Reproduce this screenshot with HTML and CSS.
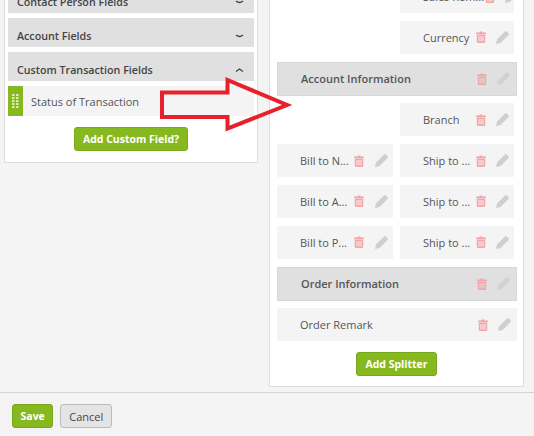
FILE: index.html
```html
<!DOCTYPE html>
<html lang="en">
<head>
  <meta charset="UTF-8" />
  <title>Transaction Fields</title>
  <link rel="stylesheet" href="styles.css">
</head>
<body>
  <svg class="defs" width="0" height="0">
    <symbol id="trash" viewBox="0 0 10 12">
      <path d="M3.500 1.600V.5h3v1.100H10v1.300H0V1.600zM.8 3.600h8.400v7.400l-.9 1H1.700l-.9-1zM2.500 5v5.500h1V5zM4.500 5v5.500h1V5zM6.500 5v5.500h1V5z" fill-rule="evenodd"/>
    </symbol>
    <symbol id="pencil" viewBox="0 0 13 13">
      <path d="M9 .4a1.200 1.200 0 0 1 1.700 0l1.900 1.900a1.200 1.200 0 0 1 0 1.700L4.600 12 0 13l1-4.600z"/>
    </symbol>
    <symbol id="grip" viewBox="0 0 7 15">
      <path d="M0 0h2.500v2H0zM4 0h2.500v2H4zM0 3h2.500v2H0zM4 3h2.500v2H4zM0 6h2.500v2H0zM4 6h2.500v2H4zM0 9h2.500v2H0zM4 9h2.500v2H4zM0 12h2.500v2H0zM4 12h2.500v2H4z"/>
    </symbol>
  </svg>

  <div class="main">
    <div class="panel panel-left">
      <div class="group">Contact Person Fields
        <svg class="chev" width="9" height="4" viewBox="0 0 9 4"><path d="M1 1q3.500 3 7 0"/></svg>
      </div>
      <div class="group">Account Fields
        <svg class="chev" width="9" height="4" viewBox="0 0 9 4"><path d="M1 1q3.500 3 7 0"/></svg>
      </div>
      <div class="group">Custom Transaction Fields
        <svg class="chev" width="9" height="4" viewBox="0 0 9 4"><path d="M1 3.500L4.500 1 8 3.500"/></svg>
      </div>
      <div class="custom-field">
        <span class="handle"><svg width="7" height="15"><use href="#grip"/></svg></span>
        Status of Transaction
      </div>
      <div class="actions"><button class="btn btn-green">Add Custom Field?</button></div>
    </div>

    <div class="panel panel-right">
      <div class="layout-grid">
        <div class="cell col2"><span class="label">Sales Rem...</span><svg class="ico-trash"><use href="#trash"/></svg><svg class="ico-pencil"><use href="#pencil"/></svg></div>
        <div class="cell col2"><span class="label">Currency</span><svg class="ico-trash"><use href="#trash"/></svg><svg class="ico-pencil"><use href="#pencil"/></svg></div>
        <div class="cell wide section"><span class="label">Account Information</span><svg class="ico-trash"><use href="#trash"/></svg><svg class="ico-pencil"><use href="#pencil"/></svg></div>
        <div class="cell col2"><span class="label">Branch</span><svg class="ico-trash"><use href="#trash"/></svg><svg class="ico-pencil"><use href="#pencil"/></svg></div>
        <div class="cell col1"><span class="label">Bill to N...</span><svg class="ico-trash"><use href="#trash"/></svg><svg class="ico-pencil"><use href="#pencil"/></svg></div>
        <div class="cell"><span class="label">Ship to ...</span><svg class="ico-trash"><use href="#trash"/></svg><svg class="ico-pencil"><use href="#pencil"/></svg></div>
        <div class="cell col1"><span class="label">Bill to A...</span><svg class="ico-trash"><use href="#trash"/></svg><svg class="ico-pencil"><use href="#pencil"/></svg></div>
        <div class="cell"><span class="label">Ship to ...</span><svg class="ico-trash"><use href="#trash"/></svg><svg class="ico-pencil"><use href="#pencil"/></svg></div>
        <div class="cell col1"><span class="label">Bill to P...</span><svg class="ico-trash"><use href="#trash"/></svg><svg class="ico-pencil"><use href="#pencil"/></svg></div>
        <div class="cell"><span class="label">Ship to ...</span><svg class="ico-trash"><use href="#trash"/></svg><svg class="ico-pencil"><use href="#pencil"/></svg></div>
        <div class="cell wide section"><span class="label">Order Information</span><svg class="ico-trash"><use href="#trash"/></svg><svg class="ico-pencil"><use href="#pencil"/></svg></div>
        <div class="cell wide"><span class="label">Order Remark</span><svg class="ico-trash"><use href="#trash"/></svg><svg class="ico-pencil"><use href="#pencil"/></svg></div>
      </div>
      <div class="actions"><button class="btn btn-green">Add Splitter</button></div>
    </div>
  </div>

  <div class="footer">
    <button class="btn btn-green btn-save">Save</button>
    <button class="btn btn-grey">Cancel</button>
  </div>

  <!-- annotation drawn over the screenshot -->
  <svg class="arrow" width="140" height="60" viewBox="160 76 140 60">
    <path d="M162 92.500H227.500V80L287 105 227.500 128.500V117H162z"/>
  </svg>
</body>
</html>
```

FILE: styles.css
```css
* {
  box-sizing: border-box;
}
html, body {
  height: 436px;
}
body {
  margin: 0;
  position: relative;
  overflow: hidden;
  background: #f4f4f4;
  font-family: 'Open Sans', sans-serif;
  font-size: 11px;
  color: #555;
  display: flex;
  flex-direction: column;
}
.defs {
  position: absolute;
}
.main {
  height: 392px;
  flex: none;
  display: flex;
  align-items: flex-start;
  padding-left: 4px;
  gap: 11px;
  overflow: hidden;
}
.panel {
  background: #fff;
  border: 1px solid #ddd;
}
.panel-left {
  width: 254px;
  height: 184px;
  margin-top: -21px;
  padding: 4px 3px 0;
  display: flex;
  flex-direction: column;
  gap: 5px;
}
.panel-right {
  width: 255px;
  height: 412px;
  margin-top: -25px;
  padding: 4px 6px 0 7px;
}
.group {
  height: 29px;
  background: #e0e0e0;
  padding: 6px 10px 0 9px;
  font-size: 10.700px;
  font-weight: 600;
  color: #444;
  display: flex;
  align-items: center;
  justify-content: space-between;
}
.chev {
  fill: none;
  stroke: #444;
  stroke-width: 1.300;
}
.custom-field {
  height: 30px;
  background: #f4f4f4;
  display: flex;
  align-items: center;
  gap: 8px;
}
.handle {
  width: 15px;
  height: 30px;
  background: #86b91f;
  display: flex;
  align-items: center;
  justify-content: center;
}
.handle svg {
  fill: #dcedb4;
}
.actions {
  display: flex;
  justify-content: center;
  margin-top: 6px;
}
.panel-right .actions {
  margin-top: 11px;
  margin-right: 1px;
}
.btn {
  height: 24px;
  padding: 0 8px;
  border-radius: 3px;
  font-family: 'Open Sans', sans-serif;
  font-size: 11px;
  line-height: 1;
}
.btn-green {
  background: #86b91f;
  border: 1px solid #7aa81c;
  color: #fff;
  font-size: 10.500px;
  font-weight: 700;
}
.btn-grey {
  background: #e4e4e4;
  border: 1px solid #bbb;
  color: #444;
}
.layout-grid {
  display: grid;
  grid-template-columns: 116px 114px;
  column-gap: 7px;
  row-gap: 7.800px;
}
.cell {
  height: 33px;
  background: #f4f4f4;
  padding-left: 23px;
  display: flex;
  align-items: center;
}
.col1 .ico-trash {
  margin-right: 1px;
}
.col2 {
  grid-column: 2;
}
.col2 .ico-trash {
  margin-left: 1px;
}
.wide {
  grid-column: 1 / -1;
  width: 240px;
}
.wide .ico-pencil {
  margin-right: 6px;
}
.section {
  height: 34px;
  background: #e0e0e0;
  border: 1px solid #d8d8d8;
  font-weight: 600;
}
.label {
  flex: 1;
  white-space: nowrap;
}
.ico-trash {
  width: 10px;
  height: 12px;
  fill: #f5a3a7;
  flex: none;
}
.ico-pencil {
  width: 13px;
  height: 13px;
  margin: 0 5px 0 10px;
  fill: #cfcfcf;
  flex: none;
}
.section .ico-pencil {
  fill: #d2d2d2;
}
.footer {
  height: 44px;
  flex: none;
  border-top: 1px solid #d4d4d4;
  padding: 11px 0 0 12px;
  display: flex;
  gap: 7px;
}
.footer .btn {
  padding: 0 8px;
}
.footer .btn-save {
  padding: 0 7.500px;
}
.arrow {
  position: absolute;
  left: 160px;
  top: 76px;
  fill: none;
  stroke: #e8202b;
  stroke-width: 4;
}
```
